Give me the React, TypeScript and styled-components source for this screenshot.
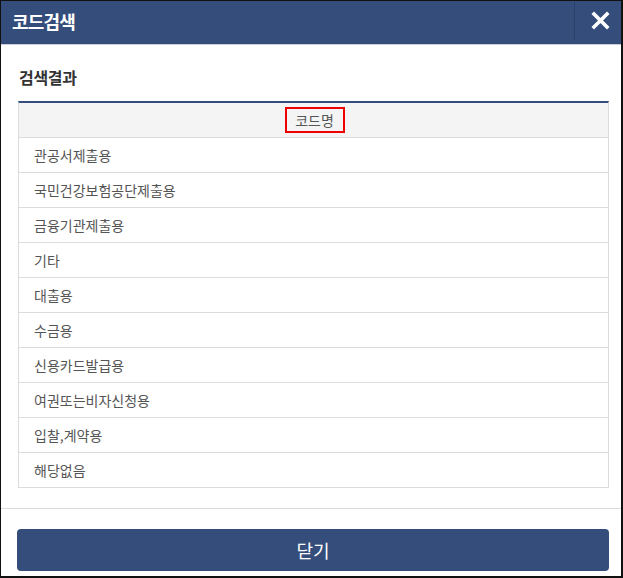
import React from 'react';
import styled, { createGlobalStyle } from 'styled-components';

const GlobalStyle = createGlobalStyle`
  html, body {
    margin: 0;
    padding: 0;
    background: #fff;
  }
  * {
    box-sizing: border-box;
  }
`

const NAVY = '#344d7a'

const Dialog = styled.div`
  width: 623px;
  height: 578px;
  display: flex;
  flex-direction: column;
  border-style: solid;
  border-color: #111;
  border-width: 1px 2px 2px 1px;
  background: #fff;
  font-family: "Noto Sans CJK KR", "Noto Sans", sans-serif;
`

const Header = styled.div`
  height: 44px;
  flex-shrink: 0;
  display: flex;
  align-items: stretch;
  background: ${NAVY};
  border-bottom: 1px solid #c9ced6;
`

const Title = styled.h1`
  flex: 1;
  margin: 0;
  padding: 0 0 4px 11px;
  display: flex;
  align-items: center;
  color: #fff;
  font-size: 18px;
  font-weight: 700;
  letter-spacing: -0.8px;
`

const CloseButton = styled.button`
  width: 47px;
  margin: 1px 0 4px;
  padding: 0 0 2px 5px;
  border: 0;
  border-left: 1px solid #2b4068;
  background: transparent;
  display: flex;
  align-items: center;
  justify-content: center;
  cursor: pointer;
`

const Body = styled.div`
  flex: 1;
  padding: 18px 12px 0 16px;
  border-bottom: 1px solid #dcdcdc;
`

const SectionTitle = styled.h2`
  margin: 0 0 10px 2px;
  height: 28px;
  display: flex;
  align-items: center;
  font-size: 16px;
  font-weight: 700;
  color: #333;
  letter-spacing: -0.3px;
`

const Table = styled.div`
  margin-left: 1px;
  border-top: 2px solid ${NAVY};
  border-left: 1px solid #dcdcdc;
  border-right: 1px solid #dcdcdc;
`

const HeadRow = styled.div`
  height: 35px;
  display: flex;
  align-items: center;
  justify-content: center;
  background: #f4f4f4;
  border-bottom: 1px solid #dcdcdc;
`

const HeadCell = styled.span`
  width: 60px;
  height: 26px;
  margin-left: 2px;
  display: flex;
  align-items: center;
  justify-content: center;
  border: 2px solid #f00000;
  font-size: 14px;
  color: #555;
`

const Row = styled.div`
  height: 35px;
  display: flex;
  align-items: center;
  padding: 0 0 1px 15px;
  border-bottom: 1px solid #dcdcdc;
  font-size: 14px;
  color: #555;
  cursor: pointer;
`

const Footer = styled.div`
  height: 67px;
  flex-shrink: 0;
  padding: 20px 12px 0 16px;
`

const PrimaryButton = styled.button`
  width: 100%;
  height: 42px;
  border: 0;
  border-radius: 4px;
  background: ${NAVY};
  color: #fff;
  font-family: inherit;
  font-size: 18px;
  cursor: pointer;
`

const codes = [
  '관공서제출용',
  '국민건강보험공단제출용',
  '금융기관제출용',
  '기타',
  '대출용',
  '수금용',
  '신용카드발급용',
  '여권또는비자신청용',
  '입찰,계약용',
  '해당없음',
]

export default function App() {
  return (
    <>
      <GlobalStyle />
      <Dialog>
        <Header>
          <Title>코드검색</Title>
          <CloseButton aria-label="닫기">
            <svg width="19" height="19" viewBox="0 0 19 19">
              <path d="M3 3 L16 16 M16 3 L3 16" stroke="#fff" strokeWidth="3.6" strokeLinecap="square" />
            </svg>
          </CloseButton>
        </Header>
        <Body>
          <SectionTitle>검색결과</SectionTitle>
          <Table>
            <HeadRow>
              <HeadCell>코드명</HeadCell>
            </HeadRow>
            {codes.map(code => (
              <Row key={code}>{code}</Row>
            ))}
          </Table>
        </Body>
        <Footer>
          <PrimaryButton>닫기</PrimaryButton>
        </Footer>
      </Dialog>
    </>
  );
}
